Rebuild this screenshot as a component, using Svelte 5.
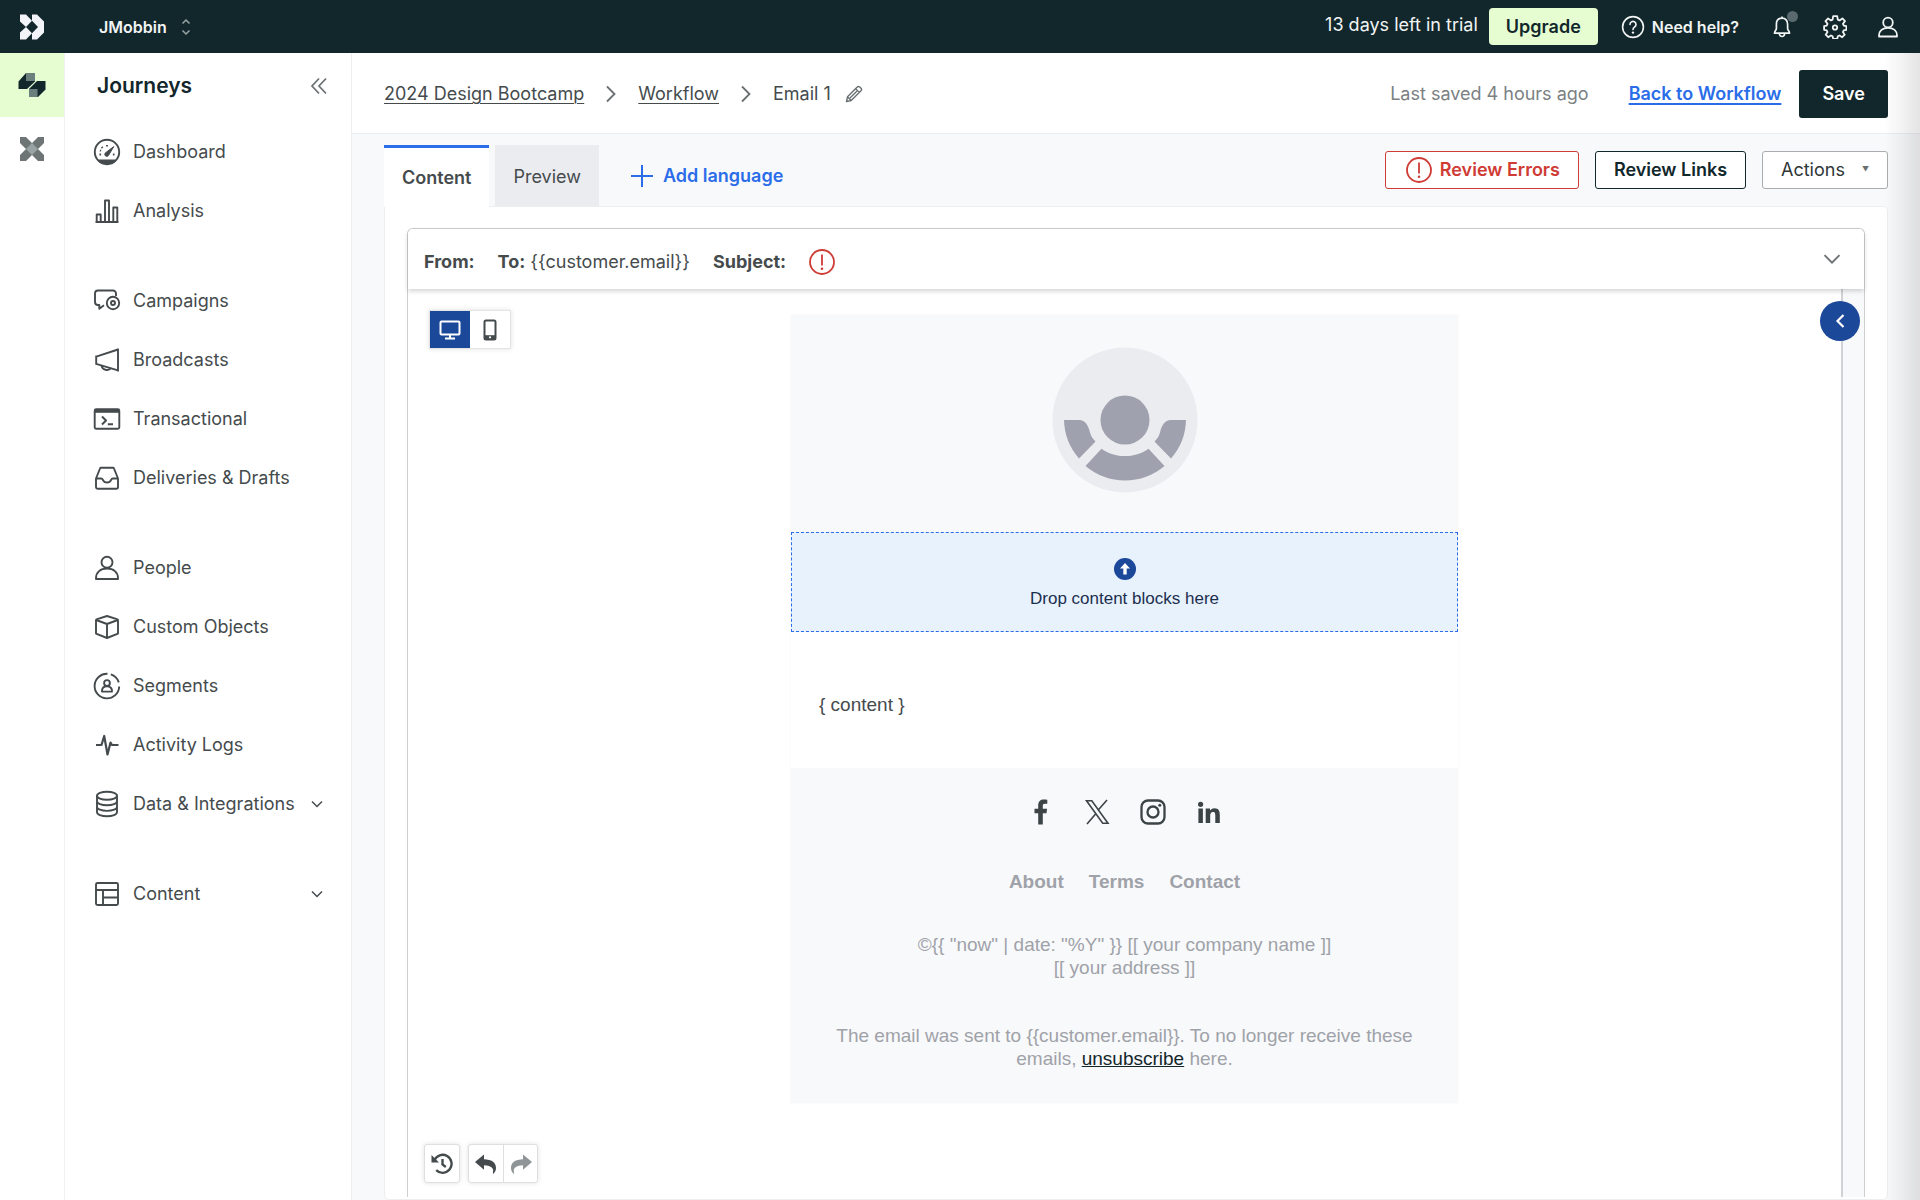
<script>
    /*=============================================
    =            Properties             =
    =============================================*/

        /**
         * Name of the workspace shown in the top bar
         * @type {string}
         */
        export let workspace = "JMobbin";

        /**
         * The selected device of the preview
         * @type {"desktop"|"mobile"}
         */
        let device = "desktop";

        /**
         * The selected tab of the editor
         * @type {string}
         */
        let active_tab = "Content";

        const tabs = ["Content", "Preview"];

        /**
         * Navigation entries, one array per visual group.
         */
        const nav_groups = [
            [
                { label: "Dashboard", icon: "dashboard" },
                { label: "Analysis", icon: "analysis" }
            ],
            [
                { label: "Campaigns", icon: "campaigns" },
                { label: "Broadcasts", icon: "broadcasts" },
                { label: "Transactional", icon: "transactional" },
                { label: "Deliveries & Drafts", icon: "deliveries" }
            ],
            [
                { label: "People", icon: "people" },
                { label: "Custom Objects", icon: "objects" },
                { label: "Segments", icon: "segments" },
                { label: "Activity Logs", icon: "activity" },
                { label: "Data & Integrations", icon: "data", expandable: true }
            ],
            [
                { label: "Content", icon: "content", expandable: true }
            ]
        ];

        /**
         * Inner markup of the navigation icons, drawn on a 28x28 grid.
         */
        const icons = {
            dashboard: '<circle cx="14" cy="14" r="12.2"/><path d="M6 22.5h16a12 12 0 0 1-16 0z" fill="currentColor"/><path d="M14 7v1.6M8.6 9l1 1M6.5 16.5h1.6M19.9 16.5h1.6"/><path d="M20.8 8.6l-5.2 8.6a2 2 0 1 1-2.8-2.6z" fill="currentColor" stroke-width="1"/><path d="M7 12.4l1 .4"/>',
            analysis: '<path d="M2.5 25h23M3.7 25v-7.5h4V25M12 25V3.5h4V25M20.300 25V10.500h4V25"/>',
            campaigns: '<path d="M23 9V6.500a3 3 0 0 0-3-3H5a3 3 0 0 0-3 3V15a3 3 0 0 0 3 3h1.300v3.800L11 18.200"/><circle cx="20" cy="16" r="6.200"/><circle cx="20" cy="16" r="2"/>',
            broadcasts: '<path d="M25 3.500v20.800L3.200 17.800v-7.200zM25 2.500v23M3.200 9.500v9.200"/><path d="M8.500 19.500a5.600 5.600 0 0 0 9.600 2.700"/>',
            transactional: '<rect x="1.700" y="4.200" width="24.600" height="19.600" rx="1.500"/><path d="M2 6h24" stroke-width="3.600"/><path d="M9 11.500l4 4-4 4M14.800 19.200h5.200" stroke-width="2"/>',
            deliveries: '<path d="M3 14.500L7 4.500a1 1 0 0 1 1-.7h12a1 1 0 0 1 1 .7l4 10V23a1.800 1.800 0 0 1-1.800 1.800H4.800A1.800 1.800 0 0 1 3 23zM3 14.500h5.200c1.200 0 1.500 1 2.200 2.300.6 1.100 1.800 1.700 3.600 1.700s3-.6 3.600-1.700c.7-1.300 1-2.300 2.200-2.300H25"/>',
            people: '<circle cx="14" cy="8.200" r="5.500"/><path d="M3 25h22v-.8c0-6-4.500-9.700-11-9.700S3 18.200 3 24.200z"/>',
            objects: '<path d="M14 3l10.500 3.400a.8.8 0 0 1 .5.800V20.600L14 25 3 20.600V7.200a.8.8 0 0 1 .5-.8zM3.200 7L14 11 24.800 7M14 11v14"/>',
            segments: '<path d="M14.500 1.800A12.300 12.300 0 1 0 26.200 14.500" /><path d="M17.800 2.400a12.300 12.300 0 0 1 8 8"/><circle cx="14" cy="11" r="2.900"/><path d="M9 19.600h10v-.7c0-2.800-2-4.700-5-4.700s-5 1.900-5 4.700z"/>',
            activity: '<path d="M3 14h5.500l2.700-9 3.300 18.500 3-12 1.500 2.500H25.500" stroke-width="2.200"/>',
            data: '<ellipse cx="14" cy="5.700" rx="10" ry="4"/><path d="M4 5.700v16.600c0 2.200 4.500 4 10 4s10-1.800 10-4V5.700M4 11.300c0 2.200 4.500 4 10 4s10-1.800 10-4M4 16.900c0 2.200 4.500 4 10 4s10-1.800 10-4"/>',
            content: '<rect x="3" y="3" width="22" height="22" rx="1.500"/><path d="M3 10h22M10 10v15M10 17.500h15"/>'
        };

    /*=====  End of Properties  ======*/
</script>

<div class="app-shell">
    <header class="top-bar">
        <a class="brand" href="#home" aria-label="Home">
            <svg width="26" height="26" viewBox="0 0 26 26">
                <path fill="#f3f3fa" d="M1 .5h6l6 6.200L7 13 1 7.500zM1 25.500h6l6-6.200L7 13 1 18.500z"/>
                <path fill="#f3f3fa" d="M13 .5h5L25 7.500v11l-7 7h-5v-6.200L19 13 13 6.700z"/>
            </svg>
        </a>
        <button class="workspace">
            {workspace}
            <svg width="10" height="18" viewBox="0 0 10 18" fill="none" stroke="#9aa5a6" stroke-width="1.500">
                <path d="M1.500 5.500L5 2l3.500 3.500M1.500 12.500L5 16l3.500-3.500"/>
            </svg>
        </button>
        <span class="trial">13 days left in trial</span>
        <button class="upgrade">Upgrade</button>
        <button class="help">
            <svg width="24" height="24" viewBox="0 0 24 24" fill="none" stroke="currentColor" stroke-width="1.600">
                <circle cx="12" cy="12" r="10.400"/>
                <path d="M9 9.400a3 3 0 1 1 4.700 2.500c-1.100.8-1.700 1.300-1.700 2.700" stroke-linecap="round"/>
                <circle cx="12" cy="17.600" r="1.200" fill="currentColor" stroke="none"/>
            </svg>
            Need help?
        </button>
        <div class="top-icons">
            <button aria-label="Notifications">
                <svg width="24" height="24" viewBox="0 0 24 24" fill="none" stroke="currentColor" stroke-width="1.700" stroke-linejoin="round">
                    <path d="M12 3.200c-3.600 0-5.600 2.600-5.600 6v4.200c0 1.800-1.900 2.600-1.900 4.800h15c0-2.200-1.900-3-1.900-4.800V9.200c0-3.400-2-6-5.600-6zM12 3.200V1.500M9.300 18.500c.2 2 1.300 3 2.700 3s2.500-1 2.700-3"/>
                </svg>
                <span class="notice-dot"></span>
            </button>
            <button aria-label="Settings">
                <svg width="24" height="24" viewBox="0 0 24 24" fill="none" stroke="currentColor" stroke-width="1.800" stroke-linejoin="round">
                    <path d="M10 1.400h4l.6 3.400 1.700.8 2.900-2 2.600 2.700-2 2.700.8 1.800 2.600.6v3.600l-2.700.6-.8 1.700 1.800 2.600-2.500 2.500-2.700-1.700-1.700.8-.6 2.600h-4l-.6-2.600-1.700-.8L5 22.400l-2.500-2.500 1.800-2.600-.8-1.700-2.600-.6v-3.600l2.600-.6.8-1.800-2-2.700 2.600-2.700 2.900 2 1.600-.8z" transform="translate(.2 -.2)"/>
                    <circle cx="12" cy="12.500" r="2.200"/>
                </svg>
            </button>
            <button aria-label="Account">
                <svg width="24" height="24" viewBox="0 0 24 24" fill="none" stroke="currentColor" stroke-width="1.800" stroke-linejoin="round">
                    <circle cx="12" cy="7.500" r="4.800"/>
                    <path d="M3 21.500h18v-1c0-4.600-3.600-7.700-9-7.700s-9 3.100-9 7.700z"/>
                </svg>
            </button>
        </div>
    </header>

    <div class="workbench">
        <nav class="rail" aria-label="Products">
            <a class="selected" href="#journeys" aria-label="Journeys">
                <svg width="28" height="26" viewBox="0 0 28 26">
                    <path fill="#12272b" d="M8 1h9v8.500L9 17H.5V9.500z"/>
                    <path fill="#6b807c" d="M8 1h9v8H8z"/>
                    <path fill="#12272b" d="M19 9h8.500v8.500L20 25h-9v-8z"/>
                    <path fill="#6b807c" d="M11 17h8.500v8H11z"/>
                </svg>
            </a>
            <a href="#data" aria-label="Data pipelines">
                <svg width="26" height="26" viewBox="0 0 26 26">
                    <path fill="#6d7675" d="M1 1h6l6 6 6-6h6v6l-6 6 6 6v6h-6l-6-6-6 6H1v-6l6-6-6-6z"/>
                    <path fill="#9aa3a3" d="M13 7l6 6-6 6-6-6z"/>
                </svg>
            </a>
        </nav>

        <aside class="side-nav">
            <div class="side-title">
                <h1>Journeys</h1>
                <button aria-label="Collapse menu">
                    <svg width="18" height="18" viewBox="0 0 18 18" fill="none" stroke="#6a7072" stroke-width="1.700">
                        <path d="M9 1.500L2 9l7 7.500M16 1.500L9 9l7 7.500"/>
                    </svg>
                </button>
            </div>
            {#each nav_groups as group}
                <ul>
                    {#each group as item}
                        <li>
                            <a href="#{item.icon}">
                                <svg class="nav-icon" viewBox="0 0 28 28" fill="none" stroke="currentColor" stroke-width="1.900" stroke-linejoin="round">
                                    {@html icons[item.icon]}
                                </svg>
                                <span>{item.label}</span>
                                {#if item.expandable}
                                    <svg class="nav-chevron" width="12" height="8" viewBox="0 0 12 8" fill="none" stroke="currentColor" stroke-width="1.500">
                                        <path d="M1 1.500L6 6.500l5-5"/>
                                    </svg>
                                {/if}
                            </a>
                        </li>
                    {/each}
                </ul>
            {/each}
        </aside>

        <main>
            <div class="page-header">
                <div class="crumbs">
                    <a href="#bootcamp">2024 Design Bootcamp</a>
                    <svg width="10" height="18" viewBox="0 0 10 18" fill="none" stroke="#6a7072" stroke-width="1.800"><path d="M1 1.500L8.500 9 1 16.500"/></svg>
                    <a href="#workflow">Workflow</a>
                    <svg width="10" height="18" viewBox="0 0 10 18" fill="none" stroke="#6a7072" stroke-width="1.800"><path d="M1 1.500L8.500 9 1 16.500"/></svg>
                    <span>Email 1</span>
                    <button class="rename" aria-label="Rename">
                        <svg width="18" height="18" viewBox="0 0 18 18" fill="none" stroke="#6a7072" stroke-width="1.400" stroke-linejoin="round">
                            <path d="M1.500 16.500l1-4.700L12.300 2a1.700 1.700 0 0 1 2.400 0l1.300 1.300a1.700 1.700 0 0 1 0 2.400L6.200 15.500zM10.600 3.700l3.700 3.700M2.500 11.800l3.700 3.700M11.800 6.200L5 13"/>
                        </svg>
                    </button>
                </div>
                <span class="saved">Last saved 4 hours ago</span>
                <a class="back" href="#workflow">Back to Workflow</a>
                <button class="save">Save</button>
            </div>

            <div class="editor">
                <div class="tab-row">
                    {#each tabs as tab}
                        <button class="tab" class:active={tab === active_tab} on:click={() => active_tab = tab}>{tab}</button>
                    {/each}
                    <button class="add-language">
                        <svg width="22" height="22" viewBox="0 0 22 22" stroke="currentColor" stroke-width="2"><path d="M11 0v22M0 11h22"/></svg>
                        Add language
                    </button>
                    <div class="actions">
                        <button class="errors">
                            <svg width="26" height="26" viewBox="0 0 26 26" fill="none" stroke="currentColor" stroke-width="1.800">
                                <circle cx="13" cy="13" r="12"/>
                                <path d="M13 5.500v11"/>
                                <circle cx="13" cy="19.800" r="1.300" fill="currentColor" stroke="none"/>
                            </svg>
                            Review Errors
                        </button>
                        <button class="links">Review Links</button>
                        <button class="more">Actions <span>▼</span></button>
                    </div>
                </div>

                <div class="panel">
                    <div class="composer">
                        <div class="envelope">
                            <span><b>From:</b></span>
                            <span><b>To:</b> {"{{customer.email}}"}</span>
                            <span><b>Subject:</b></span>
                            <svg class="alert" width="26" height="26" viewBox="0 0 26 26" fill="none" stroke="currentColor" stroke-width="1.800">
                                <circle cx="13" cy="13" r="12"/>
                                <path d="M13 5.500v11"/>
                                <circle cx="13" cy="19.800" r="1.300" fill="currentColor" stroke="none"/>
                            </svg>
                            <button aria-label="Expand envelope">
                                <svg width="18" height="10" viewBox="0 0 18 10" fill="none" stroke="#6a7072" stroke-width="1.800"><path d="M1.500 1.200L9 8.700l7.500-7.500"/></svg>
                            </button>
                        </div>

                        <div class="canvas">
                            <div class="stage">
                                <div class="email">
                                    <div class="email-head">
                                        <svg width="146" height="146" viewBox="0 0 146 146">
                                            <circle cx="73" cy="73" r="72.500" fill="#ebecf0"/>
                                            <g fill="#9fa2ae">
                                                <circle cx="73" cy="73" r="24.500"/>
                                                <path d="M12 73H27C33.500 73 36.500 79 38 85.500 39 89 40.500 91.500 43.500 94.500L27 111.500A61 61 0 0 1 12 73z"/>
                                                <path d="M134 73H119C112.500 73 109.500 79 108 85.500 107 89 105.500 91.500 102.500 94.500L119 111.500A61 61 0 0 0 134 73z"/>
                                                <path d="M33.500 119L49.500 101.700C63 111.500 83 111.500 96.500 101.700L112.500 119A61 61 0 0 1 33.500 119z"/>
                                            </g>
                                        </svg>
                                    </div>
                                    <div class="drop-zone">
                                        <svg width="22" height="22" viewBox="0 0 22 22">
                                            <circle cx="11" cy="11" r="11" fill="#1b4899"/>
                                            <path d="M11 5l5 5.500h-3.300V16.500H9.300v-6H6z" fill="#fff"/>
                                        </svg>
                                        Drop content blocks here
                                    </div>
                                    <p class="email-body">{"{ content }"}</p>
                                    <div class="email-foot">
                                        <div class="socials">
                                            <a href="#facebook" aria-label="Facebook">
                                                <svg viewBox="0 0 26 26"><path fill="#3d4446" d="M10.200 25.500V14.200H6.500V9.800h3.700V6.500C10.200 2.600 12.400.6 15.800.6c1.500 0 2.800.1 3.500.2v4h-2.300c-1.800 0-2.200.9-2.200 2.200v2.800h4.300l-.6 4.400h-3.700v11.300z"/></svg>
                                            </a>
                                            <a href="#x" aria-label="X">
                                                <svg viewBox="0 0 26 26" fill="none" stroke="#3d4446" stroke-width="1.600"><path d="M2.500 1.700h5.300L24 24.300h-5.300zM23 1l-9.200 10.500M3 25l8.800-10.200"/></svg>
                                            </a>
                                            <a href="#instagram" aria-label="Instagram">
                                                <svg viewBox="0 0 26 26" fill="none" stroke="#3d4446" stroke-width="2.300"><rect x="1.500" y="1.500" width="23" height="23" rx="6.500"/><circle cx="13" cy="13" r="5.500"/><circle cx="19.800" cy="6.300" r="1.500" fill="#3d4446" stroke="none"/></svg>
                                            </a>
                                            <a href="#linkedin" aria-label="LinkedIn">
                                                <svg viewBox="0 0 26 26" fill="#3d4446"><circle cx="4.600" cy="5.300" r="2.600"/><path d="M2.400 9.600h4.500V24H2.400zM9.700 9.600H14v2c.8-1.400 2.300-2.400 4.400-2.400 4.500 0 5.400 2.900 5.400 6.800v8h-4.500v-7.100c0-1.700 0-3.900-2.300-3.900s-2.800 1.900-2.800 3.800V24H9.700z"/></svg>
                                            </a>
                                        </div>
                                        <div class="foot-links">
                                            <a href="#about">About</a>
                                            <a href="#terms">Terms</a>
                                            <a href="#contact">Contact</a>
                                        </div>
                                        <p>{'©{{ "now" | date: "%Y" }} [[ your company name ]]'}<br>[[ your address ]]</p>
                                        <p>
                                            {"The email was sent to {{customer.email}}. To no longer receive these"}<br>
                                            emails, <a href="#unsubscribe">unsubscribe</a> here.
                                        </p>
                                    </div>
                                </div>

                                <div class="devices">
                                    <button class:chosen={device === "desktop"} aria-label="Desktop preview" on:click={() => device = "desktop"}>
                                        <svg width="22" height="20" viewBox="0 0 22 20" fill="none" stroke="currentColor" stroke-width="2"><rect x="1.500" y="1.500" width="19" height="13" rx="1"/><path d="M11 15v3M6 18.500h10"/></svg>
                                    </button>
                                    <button class:chosen={device === "mobile"} aria-label="Mobile preview" on:click={() => device = "mobile"}>
                                        <svg width="14" height="22" viewBox="0 0 14 22" fill="none" stroke="currentColor" stroke-width="2"><rect x="1.500" y="1.500" width="11" height="19" rx="1.500"/><path d="M2 18.200h10" stroke-width="4"/><circle cx="7" cy="18.300" r="1.100" fill="#fff" stroke="none"/></svg>
                                    </button>
                                </div>

                                <div class="history">
                                    <div class="tool-group">
                                        <button aria-label="Version history">
                                            <svg width="22" height="22" viewBox="0 0 22 22" fill="none" stroke="currentColor" stroke-width="2.400"><path d="M3.300 7.300a9 9 0 1 1 1.900 9.900M11.500 6v5.500l3.300 2.500"/><path d="M.5 2v7.500H8z" fill="currentColor" stroke="none"/></svg>
                                        </button>
                                    </div>
                                    <div class="tool-group">
                                        <button aria-label="Undo">
                                            <svg width="24" height="22" viewBox="0 0 24 22" fill="currentColor"><path d="M1 9l9-7.500v4.800c7.500.2 12 3 12 8.700 0 2.200-.8 4-2.300 5.500-.5.4-1 .1-.8-.5 1.500-5.300-2.500-7.500-8.900-7.700v4.500z"/></svg>
                                        </button>
                                        <button class="dim" aria-label="Redo">
                                            <svg width="24" height="22" viewBox="0 0 24 22" fill="currentColor"><path d="M23 9l-9-7.500v4.800C6.500 6.500 2 9.300 2 15c0 2.200.8 4 2.300 5.500.5.4 1 .1.800-.5-1.500-5.300 2.500-7.500 8.900-7.700v4.500z"/></svg>
                                        </button>
                                    </div>
                                </div>

                                <button class="drawer-toggle" aria-label="Open block drawer">
                                    <svg width="10" height="14" viewBox="0 0 10 14" fill="none" stroke="#fff" stroke-width="2.200"><path d="M8.500 1L2.500 7l6 6"/></svg>
                                </button>
                            </div>
                            <div class="drawer"></div>
                        </div>
                    </div>
                </div>
            </div>
        </main>
    </div>
    <div class="edge-shade"></div>
</div>

<style>
    :global(body) {
        margin: 0;
    }

    .app-shell {
        display: flex;
        flex-direction: column;
        min-height: 100vh;
        font-family: Inter, "Liberation Sans", sans-serif;
        font-size: 18px;
        line-height: 24px;
        color: #454b4d;
        background: #fff;
    }

    .app-shell * {
        box-sizing: border-box;
    }

    button {
        font: inherit;
        color: inherit;
        background: none;
        border: 0;
        padding: 0;
        cursor: pointer;
    }

    a {
        color: inherit;
    }

    svg {
        display: block;
        flex-shrink: 0;
    }

    /*----------  Top bar  ----------*/

    .top-bar {
        display: flex;
        align-items: center;
        height: 53px;
        padding-right: 20px;
        background: #12272b;
        color: #f1f4f4;
    }

    .brand {
        display: flex;
        justify-content: center;
        width: 64px;
    }

    .workspace {
        display: flex;
        align-items: center;
        gap: 14px;
        margin-left: 35px;
        margin-right: auto;
        font-size: 16px;
        font-weight: 600;
    }

    .trial {
        margin-right: 11px;
        padding-bottom: 4px;
    }

    .upgrade {
        height: 37px;
        padding: 0 17px;
        border-radius: 4px;
        background: #e6fdd2;
        color: #12272b;
        font-weight: 600;
    }

    .help {
        display: flex;
        align-items: center;
        gap: 7px;
        margin-left: 23px;
        font-size: 16px;
        font-weight: 600;
    }

    .top-icons {
        display: flex;
        gap: 29px;
        margin-left: 31px;
    }

    .top-icons button {
        position: relative;
    }

    .notice-dot {
        position: absolute;
        top: -4px;
        right: -4px;
        width: 11px;
        height: 11px;
        border-radius: 50%;
        background: #59696d;
    }

    .workbench {
        display: flex;
        flex: 1;
    }

    /*----------  Navigation  ----------*/

    .rail {
        width: 65px;
        border-right: 1px solid #f0f1f3;
    }

    .rail a {
        display: flex;
        align-items: center;
        justify-content: center;
        height: 64px;
    }

    .rail .selected {
        background: #e6fdd2;
    }

    .side-nav {
        width: 287px;
        border-right: 1px solid #eceef0;
    }

    .side-title {
        display: flex;
        align-items: center;
        justify-content: space-between;
        height: 69px;
        padding: 0 23px 4px 32px;
    }

    h1 {
        margin: 0;
        font-size: 21px;
        font-weight: 600;
        color: #12272b;
    }

    .side-nav ul {
        margin: 0 0 31px;
        padding: 0;
        list-style: none;
    }

    .side-nav li a {
        display: flex;
        align-items: center;
        height: 59px;
        padding: 0 28px;
        text-decoration: none;
    }

    .nav-icon {
        width: 28px;
        height: 28px;
        margin-right: 12px;
    }

    .nav-chevron {
        margin-left: auto;
    }

    /*----------  Page header  ----------*/

    main {
        display: flex;
        flex-direction: column;
        flex: 1;
        min-width: 0;
        background: #f8f9fb;
    }

    .page-header {
        display: flex;
        align-items: center;
        height: 81px;
        padding: 2px 32px 0;
        border-bottom: 1px solid #eceef0;
        background: #fff;
    }

    .crumbs {
        display: flex;
        align-items: center;
        gap: 22px;
        margin-right: auto;
    }

    .crumbs a,
    .back {
        text-underline-offset: 3px;
        text-decoration-thickness: 1px;
    }

    .rename {
        margin-left: -8px;
    }

    .saved {
        margin-right: 40px;
        color: #7b8183;
    }

    .back {
        margin-right: 18px;
        color: #2b6de9;
        font-weight: 600;
        text-decoration-thickness: 2px;
    }

    .save {
        height: 48px;
        padding: 0 23px;
        border-radius: 3px;
        background: #12272b;
        color: #fff;
        font-weight: 600;
    }

    /*----------  Editor  ----------*/

    .editor {
        display: flex;
        flex-direction: column;
        flex: 1;
        padding: 11px 32px 0;
    }

    .tab-row {
        display: flex;
        align-items: stretch;
        height: 61px;
    }

    .tab {
        height: 61px;
        margin-right: 6px;
        padding: 0 18px;
        border-top: 3px solid #ebecf0;
        background: #ebecf0;
    }

    .tab.active {
        position: relative;
        height: 62px;
        border-top-color: #2b6de9;
        background: #fff;
        font-weight: 600;
    }

    .add-language {
        display: flex;
        align-items: center;
        gap: 10px;
        margin-left: 26px;
        color: #2b6de9;
        font-weight: 600;
    }

    .actions {
        display: flex;
        align-items: flex-start;
        gap: 16px;
        margin-left: auto;
        padding-top: 6px;
    }

    .actions button {
        display: flex;
        align-items: center;
        height: 38px;
        padding: 0 18px;
        border: 1px solid #12272b;
        border-radius: 3px;
        background: #fff;
        color: #12272b;
        font-weight: 600;
    }

    .actions .errors {
        gap: 8px;
        padding-left: 20px;
        border-color: #cf3b35;
        color: #cf3b35;
    }

    .actions .more {
        gap: 17px;
        border-color: #a9adaf;
        font-weight: 400;
        color: #2f3638;
    }

    .more span {
        font-size: 7px;
        color: #6a7072;
    }

    .panel {
        display: flex;
        flex: 1;
        padding: 21px 22px 2px;
        border: 1px solid #eceef0;
        border-radius: 0 5px 5px 5px;
        background: #fff;
    }

    .composer {
        display: flex;
        flex-direction: column;
        flex: 1;
        border: 1px solid #ccd0d1;
        border-bottom: 0;
        border-radius: 6px 6px 0 0;
    }

    .envelope {
        position: relative;
        z-index: 1;
        display: flex;
        align-items: center;
        gap: 23px;
        height: 60px;
        padding: 5px 23px 0 16px;
        border-radius: 5px 5px 0 0;
        background: #fff;
        box-shadow: 0 2px 5px rgba(0, 0, 0, 0.18);
    }

    .envelope b {
        font-weight: 700;
    }

    .envelope button {
        margin-left: auto;
        padding-bottom: 6px;
    }

    .alert {
        color: #cf3b35;
    }

    .canvas {
        display: flex;
        flex: 1;
    }

    .stage {
        position: relative;
        flex: 1;
        padding: 26px 24px 60px;
        border-right: 2px solid #d0d3d5;
    }

    .drawer {
        width: 21px;
        background: #f8f9fb;
    }

    .devices {
        position: absolute;
        top: 21px;
        left: 21px;
        display: flex;
        border: 1px solid #e2e4e5;
        box-shadow: 0 0 5px rgba(0, 0, 0, 0.12);
    }

    .devices button {
        display: flex;
        align-items: center;
        justify-content: center;
        width: 40px;
        height: 37px;
        background: #fff;
    }

    .devices .chosen {
        background: #1b4899;
        color: #fff;
    }

    .history {
        position: absolute;
        bottom: 14px;
        left: 16px;
        display: flex;
        gap: 8px;
    }

    .tool-group {
        display: flex;
        border: 1px solid #dddfe1;
        border-radius: 3px;
        background: #fff;
        box-shadow: 0 0 5px rgba(0, 0, 0, 0.12);
    }

    .tool-group button {
        display: flex;
        align-items: center;
        justify-content: center;
        width: 34px;
        height: 37px;
    }

    .tool-group button + button {
        border-left: 1px solid #dddfe1;
    }

    .tool-group .dim {
        color: #8f9596;
    }

    .drawer-toggle {
        position: absolute;
        top: 12px;
        right: -19px;
        display: flex;
        align-items: center;
        justify-content: center;
        width: 40px;
        height: 40px;
        border-radius: 50%;
        background: #1b4899;
    }

    /*----------  Email preview  ----------*/

    .email {
        max-width: 667px;
        margin: 0 auto;
        background: #fff;
        box-shadow: 0 0 3px rgba(0, 0, 0, 0.04);
        font-family: "Liberation Sans", Arial, sans-serif;
        font-size: 19px;
        line-height: 23px;
    }

    .email-head {
        display: flex;
        justify-content: center;
        padding: 32px 0 39px;
        background: #f8f9fb;
    }

    .drop-zone {
        display: flex;
        flex-direction: column;
        align-items: center;
        gap: 7px;
        height: 100px;
        padding-top: 25px;
        border: 1px dashed #2b6de9;
        background: #e7f2fd;
        color: #1d2f4f;
        font-size: 17px;
    }

    .email-body {
        margin: 0;
        height: 136px;
        padding: 61px 28px 0;
    }

    .email-foot {
        padding: 31px 36px 33px;
        background: #f8f9fb;
        color: #9fa2a8;
        text-align: center;
    }

    .socials,
    .foot-links {
        display: flex;
        justify-content: center;
    }

    .socials {
        gap: 30px;
        margin-bottom: 45px;
    }

    .socials svg {
        width: 26px;
        height: 26px;
    }

    .foot-links {
        gap: 25px;
        font-weight: 700;
    }

    .foot-links a {
        text-decoration: none;
    }

    .email-foot p {
        margin: 40px 0 0;
    }

    .email-foot p:last-child {
        margin-top: 45px;
    }

    .email-foot p a {
        color: #12272b;
    }

    /* soft shade along the right edge of the window */
    .edge-shade {
        position: fixed;
        top: 53px;
        right: 0;
        bottom: 0;
        width: 36px;
        background: linear-gradient(to right, rgba(60, 60, 60, 0), rgba(60, 60, 60, 0.05) 40%, rgba(60, 60, 60, 0.14));
        pointer-events: none;
    }
</style>
